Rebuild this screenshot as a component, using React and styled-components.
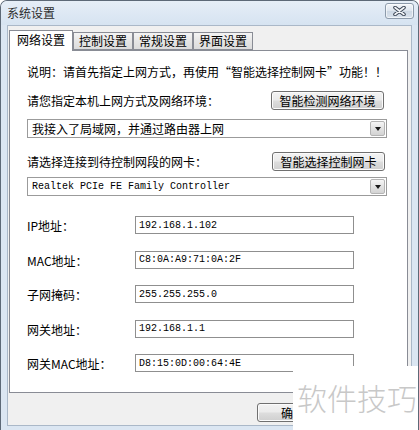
import React from "react";
import styled, { createGlobalStyle } from "styled-components";

const GlobalStyle = createGlobalStyle`
  html, body {
    margin: 0;
    padding: 0;
    background: #ffffff;
  }
  body {
    font-family: "Noto Sans CJK SC", "Noto Sans", sans-serif;
    font-size: 12px;
    color: #000;
  }
`;

const Window = styled.div`
  position: relative;
  width: 419px;
  height: 430px;
  box-sizing: border-box;
  display: flex;
  flex-direction: column;
  background: #dbe6f2;
  border: 1px solid #5d6977;
  border-bottom: none;
  border-radius: 7px 7px 0 0;
  overflow: hidden;
`;

const TitleBar = styled.div`
  height: 24px;
  display: flex;
  align-items: center;
  justify-content: space-between;
  padding: 0 4px 0 6px;
  background: linear-gradient(#e6eef7, #d6e3f1);
`;

const Title = styled.span`
  color: #2d2d2d;
  font-size: 12px;
  line-height: 16px;
`;

const CloseButton = styled.div`
  width: 29px;
  height: 16px;
  margin-top: -4px;
  box-sizing: border-box;
  border: 1px solid #8d9bab;
  border-radius: 3px;
  background: linear-gradient(#f3f6fa, #dde5ee 50%, #cdd8e4 51%, #d9e2ec);
  box-shadow: inset 0 0 0 1px rgba(255, 255, 255, 0.6);
  display: flex;
  align-items: center;
  justify-content: center;
`;

const Client = styled.div`
  flex: 1;
  margin: 0 6px 4px 6px;
  padding: 4px 3px 0 1px;
  background: #f0f0f0;
  border: 1px solid #aab8c8;
  display: flex;
  flex-direction: column;
`;

const TabStrip = styled.div`
  height: 21px;
  display: flex;
  align-items: flex-end;
  margin-bottom: -1px;
`;

const Tab = styled.div`
  box-sizing: border-box;
  height: ${(p) => (p.$active ? "21px" : "18px")};
  padding: 0 ${(p) => (p.$active ? "7px" : "5px")};
  margin-bottom: ${(p) => (p.$active ? "0" : "1px")};
  border: 1px solid #898c95;
  border-bottom: ${(p) => (p.$active ? "none" : "1px solid #898c95")};
  background: ${(p) =>
    p.$active ? "#ffffff" : "linear-gradient(#f4f4f4, #e6e6e6 50%, #dcdcdc)"};
  position: relative;
  z-index: ${(p) => (p.$active ? 1 : 0)};
  display: flex;
  align-items: center;
  font-size: 12px;
  line-height: 16px;
  padding-bottom: ${(p) => (p.$active ? "2px" : "0")};
`;

const Panel = styled.div`
  height: 343px;
  box-sizing: border-box;
  background: #ffffff;
  border: 1px solid #898c95;
  padding: 13px 20px 0 17px;
  display: flex;
  flex-direction: column;
`;

const Note = styled.div`
  line-height: 16px;
`;

const ActionRow = styled.div`
  display: flex;
  align-items: center;
  justify-content: space-between;
  margin-top: ${(p) => p.$top}px;
  line-height: 16px;
`;

const PushButton = styled.div`
  box-sizing: border-box;
  width: ${(p) => p.$width || 113}px;
  height: 19px;
  margin-right: ${(p) => p.$right || 0}px;
  border: 1px solid #707070;
  border-radius: 3px;
  background: linear-gradient(#f3f3f3, #ebebeb 48%, #dddddd 52%, #cfcfcf);
  box-shadow: inset 0 0 0 1px #fbfbfb;
  display: flex;
  align-items: center;
  justify-content: center;
  font-size: 12px;
  line-height: 16px;
`;

const Select = styled.div`
  box-sizing: border-box;
  height: 19px;
  margin-top: ${(p) => p.$top}px;
  border: 1px solid #9b9b9b;
  background: #ffffff;
  display: flex;
  align-items: center;
  justify-content: space-between;
  padding: 0 1px 0 4px;
  font-family: ${(p) =>
    p.$mono
      ? `"Liberation Mono", "DejaVu Sans Mono", monospace`
      : `"Noto Sans CJK SC", sans-serif`};
  font-size: ${(p) => (p.$mono ? "10px" : "12px")};
  line-height: 16px;
`;

const SelectArrow = styled.div`
  box-sizing: border-box;
  width: 15px;
  height: 15px;
  border: 1px solid #b4b4b4;
  border-radius: 2px;
  background: linear-gradient(#f6f6f6, #e3e3e3 50%, #d3d3d3);
  display: flex;
  align-items: center;
  justify-content: center;

  &::after {
    content: "";
    border-left: 3.5px solid transparent;
    border-right: 3.5px solid transparent;
    border-top: 4px solid #1a1a1a;
    margin-top: 1px;
  }
`;

const FieldGrid = styled.div`
  margin-top: 20px;
  display: grid;
  grid-template-columns: 108px 219px;
  row-gap: 16.5px;
  align-items: center;
`;

const FieldLabel = styled.div`
  line-height: 16px;
  padding-top: 2px;
`;

const TextBox = styled.div`
  box-sizing: border-box;
  height: 18px;
  border: 1px solid #8f8f8f;
  background: #ffffff;
  padding: 0 3px;
  display: flex;
  align-items: center;
  font-family: "Liberation Mono", "DejaVu Sans Mono", monospace;
  font-size: 10px;
`;

const Footer = styled.div`
  display: flex;
  justify-content: flex-start;
  padding: 10px 0 0 248px;
`;

const Watermark = styled.div`
  position: absolute;
  left: 292px;
  top: 365px;
  right: 0;
  bottom: 0;
  background: #ffffff;
  padding: 16px 0 0 4px;
  color: #c8c8c8;
  font-size: 30px;
  line-height: 30px;
  font-weight: 300;
  z-index: 5;
`;

const fields = [
  ["IP地址：", "192.168.1.102"],
  ["MAC地址：", "C8:0A:A9:71:0A:2F"],
  ["子网掩码：", "255.255.255.0"],
  ["网关地址：", "192.168.1.1"],
  ["网关MAC地址：", "D8:15:0D:00:64:4E"],
];

const tabs = ["网络设置", "控制设置", "常规设置", "界面设置"];

export default function App() {
  return (
    <>
      <GlobalStyle />
      <Window>
        <TitleBar>
          <Title>系统设置</Title>
          <CloseButton>
            <svg width="13" height="10" viewBox="0 0 13 10">
              <path d="M2 1.5 L11 8.5 M11 1.5 L2 8.5" stroke="#3d4756" strokeWidth="3.6" strokeLinecap="round" />
              <path d="M2 1.5 L11 8.5 M11 1.5 L2 8.5" stroke="#f4f6f9" strokeWidth="1.6" strokeLinecap="round" />
            </svg>
          </CloseButton>
        </TitleBar>
        <Client>
          <TabStrip>
            {tabs.map((t, i) => (
              <Tab key={t} $active={i === 0}>
                {t}
              </Tab>
            ))}
          </TabStrip>
          <Panel>
            <Note>说明：请首先指定上网方式，再使用“智能选择控制网卡”功能！！</Note>
            <ActionRow $top={11}>
              <span>请您指定本机上网方式及网络环境：</span>
              <PushButton $right={3}>智能检测网络环境</PushButton>
            </ActionRow>
            <Select $top={9}>
              <span>我接入了局域网，并通过路由器上网</span>
              <SelectArrow />
            </Select>
            <ActionRow $top={14}>
              <span>请选择连接到待控制网段的网卡：</span>
              <PushButton $right={2}>智能选择控制网卡</PushButton>
            </ActionRow>
            <Select $top={6} $mono>
              <span>Realtek PCIe FE Family Controller</span>
              <SelectArrow />
            </Select>
            <FieldGrid>
              {fields.map(([label, value]) => (
                <React.Fragment key={label}>
                  <FieldLabel>{label}</FieldLabel>
                  <TextBox>{value}</TextBox>
                </React.Fragment>
              ))}
            </FieldGrid>
          </Panel>
          <Footer>
            <PushButton $width={72}>确定</PushButton>
          </Footer>
        </Client>
        <Watermark>软件技巧</Watermark>
      </Window>
    </>
  );
}
